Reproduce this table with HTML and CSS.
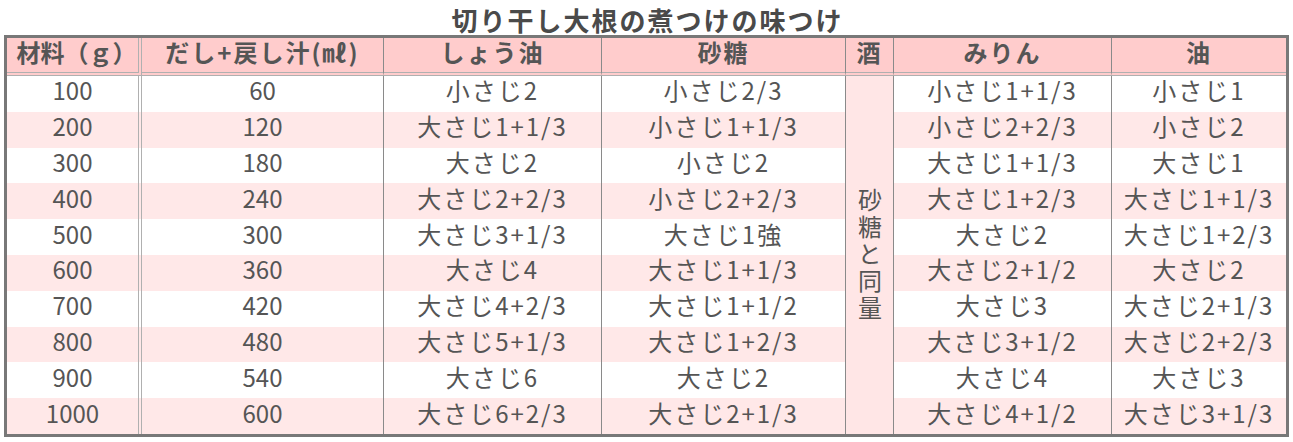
FILE: index.html
```html
<!DOCTYPE html>
<html lang="ja">
<head>
<meta charset="utf-8">
<link rel="stylesheet" href="styles.css">
</head>
<body>
<div class="wrap">
  <h1 class="title">切り干し大根の煮つけの味つけ</h1>
  <table class="recipe">
    <thead>
      <tr>
        <th class="c1">材料（ｇ）</th>
        <th class="c2">だし+戻し汁(㎖)</th>
        <th class="c3">しょう油</th>
        <th class="c4">砂糖</th>
        <th class="c5">酒</th>
        <th class="c6">みりん</th>
        <th class="c7">油</th>
      </tr>
    </thead>
    <tbody>
      <tr><td class="c1">100</td><td class="c2">60</td><td>小さじ2</td><td>小さじ2/3</td><td class="sake" rowspan="10"><span class="vert">砂糖と同量</span></td><td>小さじ1+1/3</td><td class="c7">小さじ1</td></tr>
      <tr class="alt"><td class="c1">200</td><td class="c2">120</td><td>大さじ1+1/3</td><td>小さじ1+1/3</td><td>小さじ2+2/3</td><td class="c7">小さじ2</td></tr>
      <tr><td class="c1">300</td><td class="c2">180</td><td>大さじ2</td><td>小さじ2</td><td>大さじ1+1/3</td><td class="c7">大さじ1</td></tr>
      <tr class="alt"><td class="c1">400</td><td class="c2">240</td><td>大さじ2+2/3</td><td>小さじ2+2/3</td><td>大さじ1+2/3</td><td class="c7">大さじ1+1/3</td></tr>
      <tr><td class="c1">500</td><td class="c2">300</td><td>大さじ3+1/3</td><td>大さじ1強</td><td>大さじ2</td><td class="c7">大さじ1+2/3</td></tr>
      <tr class="alt"><td class="c1">600</td><td class="c2">360</td><td>大さじ4</td><td>大さじ1+1/3</td><td>大さじ2+1/2</td><td class="c7">大さじ2</td></tr>
      <tr><td class="c1">700</td><td class="c2">420</td><td>大さじ4+2/3</td><td>大さじ1+1/2</td><td>大さじ3</td><td class="c7">大さじ2+1/3</td></tr>
      <tr class="alt"><td class="c1">800</td><td class="c2">480</td><td>大さじ5+1/3</td><td>大さじ1+2/3</td><td>大さじ3+1/2</td><td class="c7">大さじ2+2/3</td></tr>
      <tr><td class="c1">900</td><td class="c2">540</td><td>大さじ6</td><td>大さじ2</td><td>大さじ4</td><td class="c7">大さじ3</td></tr>
      <tr class="alt"><td class="c1">1000</td><td class="c2">600</td><td>大さじ6+2/3</td><td>大さじ2+1/3</td><td>大さじ4+1/2</td><td class="c7">大さじ3+1/3</td></tr>
    </tbody>
  </table>
</div>
</body>
</html>
```
FILE: styles.css
```css
html, body {
  margin: 0;
  padding: 0;
  background: #ffffff;
}
body {
  font-family: "Noto Sans CJK JP", "Noto Sans", sans-serif;
  color: #555555;
}
.wrap {
  width: 1285px;
  margin-left: 4px;
}
.title {
  margin: 0;
  box-sizing: border-box;
  height: 35px;
  padding-top: 5px;
  line-height: 30px;
  font-size: 26px;
  font-weight: bold;
  letter-spacing: 2px;
  text-align: center;
  color: #4a4a4a;
  padding-left: 2px;
}
.recipe {
  width: 1285px;
  border-collapse: separate;
  border-spacing: 0;
  table-layout: fixed;
  border: 3px solid #787878;
}
.recipe th,
.recipe td {
  box-sizing: border-box;
  padding: 0;
  text-align: center;
  border-right: 1px solid #8a8a8a;
  font-size: 24px;
  letter-spacing: 2px;
  white-space: nowrap;
}
.recipe thead tr { height: 38px; }
.recipe th {
  background: #ffcccc;
  font-weight: bold;
  color: #555555;
  border-bottom: 4px double #b0b0b0;
  line-height: 28px;
  padding-bottom: 6px;
}
.recipe tbody tr { height: 35.8px; }
.recipe td {
  line-height: 26px;
  padding-bottom: 7px;
  font-weight: normal;
  color: #555555;
}
.recipe .c1 { width: 135px; border-right: 4px double #b0b0b0; }
.recipe th.c2 { width: 242px; }
.recipe th.c3 { width: 218px; }
.recipe th.c4 { width: 244px; }
.recipe th.c5 { width: 48px; }
.recipe th.c6 { width: 218px; }
.recipe th.c7 { width: 174px; }
.recipe .c7 { border-right: none; }
.recipe .c1, .recipe .c2 { letter-spacing: 0; }
.recipe th.c1 { letter-spacing: 0; padding-left: 8px; }
.recipe th.c2 { letter-spacing: 2px; }
.recipe tr.alt td { background: #ffe8e8; }
.recipe td.sake {
  background: #ffe6e6;
  vertical-align: middle;
  letter-spacing: 0;
  padding-bottom: 0;
  padding-top: 4px;
}
.vert {
  writing-mode: vertical-rl;
  letter-spacing: 3px;
  line-height: 30px;
  display: inline-block;
}
```
